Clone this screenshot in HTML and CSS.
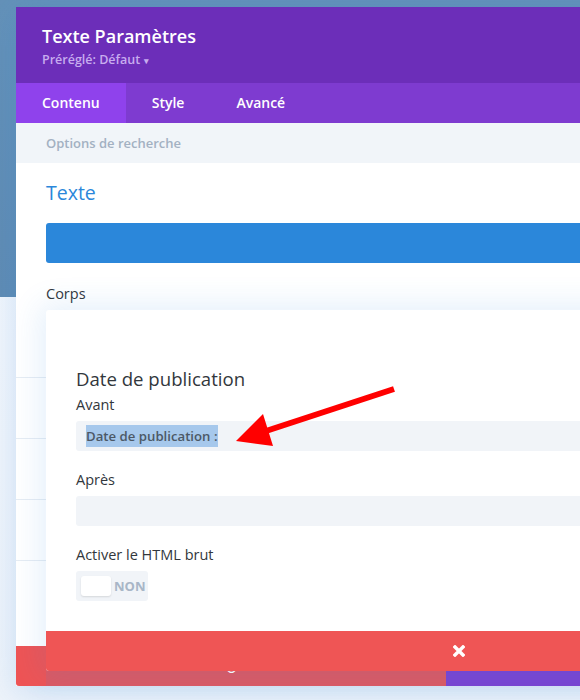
FILE: index.html
```html
<!doctype html>
<html lang="fr">
  <head>
    <meta charset="utf-8">
    <meta name="viewport" content="width=device-width, initial-scale=1">
    <title>Texte Paramètres</title>
    <link rel="stylesheet" href="styles.css">
  </head>
  <body>
    <div class="panel">
      <div class="panel-header">
        <h1>Texte Paramètres</h1>
        <div class="preset">Préréglé: Défaut <span class="caret">▾</span></div>
      </div>
      <div class="tabs">
        <a class="active" href="#">Contenu</a>
        <a href="#">Style</a>
        <a href="#">Avancé</a>
      </div>
      <div class="search">Options de recherche</div>

      <div class="panel-body">
        <h2 class="group-title">Texte</h2>
        <div class="blue-bar"></div>
        <div class="label corps">Corps</div>
        <div class="rows">
          <div class="row"></div>
          <div class="row"></div>
          <div class="row"></div>
          <div class="row"></div>
        </div>
      </div>

      <div class="panel-footer">
        <button class="btn-cancel"><span class="undo">↺</span></button>
        <button class="btn-save"></button>
      </div>

      <div class="popup">
        <div class="popup-body">
          <h3>Date de publication</h3>
          <div class="label">Avant</div>
          <div class="field"><span class="selected">Date de publication :</span></div>
          <div class="label">Après</div>
          <div class="field"></div>
          <div class="label">Activer le HTML brut</div>
          <div class="toggle">
            <span class="knob"></span>
            <span class="toggle-text">NON</span>
          </div>
        </div>
        <div class="popup-footer">
          <svg width="12" height="12" viewBox="0 0 12 12">
            <path d="M2 2 L10 10 M10 2 L2 10" stroke="#fff" stroke-width="3.4" stroke-linecap="square"/>
          </svg>
        </div>
      </div>
    </div>

    <svg class="arrow" width="580" height="700" viewBox="0 0 580 700">
      <line x1="394" y1="389" x2="266" y2="431" stroke="#ff0000" stroke-width="6"/>
      <polygon points="236,441 263,414 273,446" fill="#ff0000"/>
    </svg>
  </body>
</html>
```

FILE: styles.css
```css
html, body {
  margin: 0;
  height: 100%;
  overflow: hidden;
}
body {
  font-family: "Open Sans", "Liberation Sans", sans-serif;
  background:
    linear-gradient(#6491b8, #5f8bb3) 0 0 / 100% 297px no-repeat,
    linear-gradient(#f6f9fd, #eef3fa);
  position: relative;
}
.panel {
  position: absolute;
  left: 16px;
  top: 7px;
  width: 900px;
  background: #fff;
  box-shadow: 0 5px 30px rgba(43, 135, 218, 0.2);
}
.panel-header {
  background: #6c2eb9;
  height: 76px;
  padding: 0 26px;
  box-sizing: border-box;
  color: #fff;
  padding-top: 17px;
}
.panel-header h1 {
  margin: 0;
  font-size: 18px;
  font-weight: 600;
  line-height: 24px;
}
.preset {
  font-size: 12.5px;
  font-weight: 600;
  color: #c7acef;
  margin-top: 3px;
}
.caret {
  font-size: 9px;
  margin-left: 1px;
}
.tabs {
  background: #7e3bd0;
  height: 40px;
  display: flex;
}
.tabs a {
  color: #fff;
  text-decoration: none;
  font-size: 14px;
  font-weight: 600;
  line-height: 40px;
  padding: 0 26px;
}
.tabs a.active {
  background: #8f42ec;
}
.search {
  background: #f1f5f9;
  height: 40px;
  line-height: 40px;
  padding-left: 30px;
  font-size: 13px;
  font-weight: 600;
  color: #a3b1c2;
}
.panel-body {
  height: 483px;
  padding-top: 16px;
  box-sizing: border-box;
}
.group-title {
  margin: 0 0 0 30px;
  font-size: 19.5px;
  font-weight: 400;
  line-height: 28px;
  color: #2b87da;
}
.blue-bar {
  margin: 16px 0 0 30px;
  height: 40px;
  background: #2b87da;
  border-radius: 3px 0 0 3px;
}
.label {
  font-size: 14.5px;
  color: #32373c;
  line-height: 20px;
}
.corps {
  margin: 21px 0 0 30px;
}
.rows {
  margin-top: 13px;
}
.row {
  height: 60px;
  border-bottom: 1px solid #e6ecf3;
}
.panel-footer {
  display: flex;
  height: 40px;
}
.panel-footer button {
  border: 0;
  margin: 0;
  padding: 0;
  height: 40px;
  color: #fff;
}
.btn-cancel {
  width: 430px;
  background: linear-gradient(to right, #ee5455 30px, #dd5962 30px);
  border-radius: 0 0 0 3px;
  font-size: 16px;
  line-height: 40px;
}
.undo {
  position: relative;
  top: 3px;
}
.btn-save {
  flex: 1;
  background: #7b44d1;
}
.popup {
  position: absolute;
  left: 30px;
  top: 303px;
  width: 826px;
  background: #fff;
  border-radius: 3px;
  box-shadow: 0 0 30px 6px rgba(43, 135, 218, 0.12);
}
.popup-body {
  padding: 56px 30px 30px;
}
.popup h3 {
  margin: 0;
  font-size: 18.6px;
  font-weight: 400;
  line-height: 26px;
  color: #32373c;
}
.popup .label {
  margin-top: 3px;
}
.field {
  margin-top: 6px;
  margin-bottom: 19px;
  height: 30px;
  background: #f1f4f8;
  border-radius: 3px;
  padding-left: 10px;
  font-size: 13.2px;
  font-weight: 600;
  line-height: 30px;
  color: #4c5866;
}
.selected {
  background: #a6c8ec;
  padding: 2px 0;
}
.toggle {
  margin-top: 6px;
  width: 72px;
  height: 30px;
  background: #f1f4f8;
  border-radius: 3px;
  display: flex;
  align-items: center;
  box-sizing: border-box;
  padding-left: 5px;
}
.knob {
  width: 30px;
  height: 20px;
  background: #fff;
  border-radius: 3px;
  box-shadow: 0 1px 2px rgba(0, 0, 0, 0.12);
}
.toggle-text {
  margin-left: 3px;
  font-size: 13px;
  font-weight: 700;
  color: #a8b6c7;
}
.popup-footer {
  height: 40px;
  background: #ef5555;
  border-radius: 0 0 0 3px;
  display: flex;
  align-items: center;
  justify-content: center;
}
.arrow {
  position: absolute;
  left: 0;
  top: 0;
  pointer-events: none;
}
```
